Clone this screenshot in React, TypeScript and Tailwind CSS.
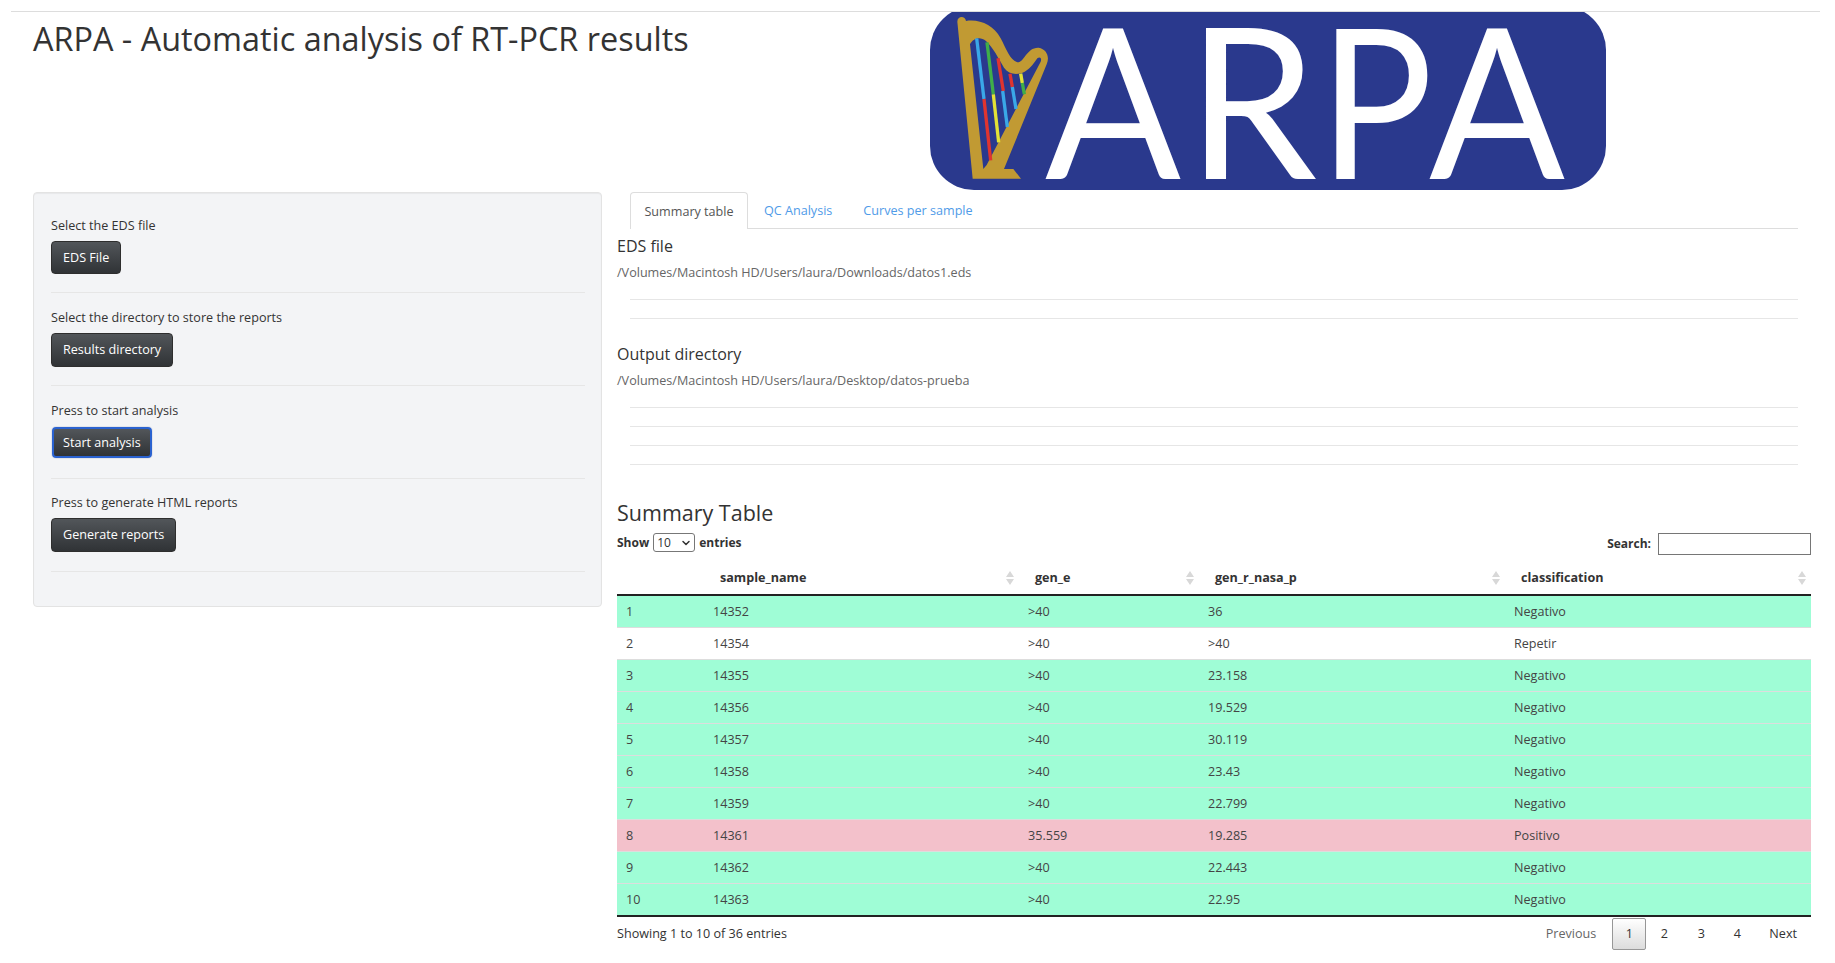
import { ChevronDown } from "lucide-react";

const rows = [
  ["1", "14352", ">40", "36", "Negativo"],
  ["2", "14354", ">40", ">40", "Repetir"],
  ["3", "14355", ">40", "23.158", "Negativo"],
  ["4", "14356", ">40", "19.529", "Negativo"],
  ["5", "14357", ">40", "30.119", "Negativo"],
  ["6", "14358", ">40", "23.43", "Negativo"],
  ["7", "14359", ">40", "22.799", "Negativo"],
  ["8", "14361", "35.559", "19.285", "Positivo"],
  ["9", "14362", ">40", "22.443", "Negativo"],
  ["10", "14363", ">40", "22.95", "Negativo"],
];

const rowColors: Record<string, string> = {
  Negativo: "bg-[#9ffdd6]",
  Repetir: "bg-white",
  Positivo: "bg-[#f3c1cb]",
};

function ArpaLogo() {
  const inner =
    "M120 118 C128 100 150 92 168 108 C190 128 205 160 222 188 C236 208 262 212 284 200 C302 190 314 172 322 160 C330 154 336 160 332 170 L170 480 L160 492 Z";
  return (
    <svg width="676" height="178" viewBox="0 0 676 178" className="block">
      <rect x="0" y="-6" width="676" height="184" rx="44" fill="#2a398d" />
      <g transform="scale(0.33333) translate(0 -21)">
        <path
          fillRule="evenodd"
          fill="#c19a33"
          d={`M82 50 C82 32 106 32 108 48 C150 42 190 60 212 100 C228 130 240 166 262 172 C282 174 290 126 326 128 C350 132 360 156 350 178 L222 492 L250 492 L273 521 L128 521 Z ${inner}`}
        />
        <g strokeWidth="10" fill="none">
          <path d="M140 100 L162 282" stroke="#3aa8e8" />
          <path d="M162 282 L182 466" stroke="#e0342f" />
          <path d="M171 112 L190 268" stroke="#3fae49" />
          <path d="M190 268 L206 412" stroke="#e3e236" />
          <path d="M204 160 L220 258" stroke="#e0342f" />
          <path d="M218 258 L232 366" stroke="#3aa8e8" />
          <path d="M240 206 L247 246" stroke="#e0342f" />
          <path d="M247 246 L258 312" stroke="#3aa8e8" />
          <path d="M272 206 L277 234" stroke="#e3e236" />
          <path d="M277 234 L283 268" stroke="#3fae49" />
        </g>
      </g>
      <g fill="#ffffff" fontFamily="Lato, 'Open Sans', sans-serif" fontWeight="400" fontSize="210">
        <text x="115" y="167" textLength="136" lengthAdjust="spacingAndGlyphs">A</text>
        <text x="257" y="167" textLength="130" lengthAdjust="spacingAndGlyphs">R</text>
        <text x="389" y="167" textLength="114" lengthAdjust="spacingAndGlyphs">P</text>
        <text x="499" y="167" textLength="136" lengthAdjust="spacingAndGlyphs">A</text>
      </g>
    </svg>
  );
}

function SortIcon() {
  return (
    <svg width="8" height="14" viewBox="0 0 8 14" className="absolute right-[5px] top-[10px]">
      <path d="M4 0 L8 6 L0 6 Z" fill="#d8d8d8" />
      <path d="M4 14 L8 8 L0 8 Z" fill="#d8d8d8" />
    </svg>
  );
}

function ActionButton({ label, height, focused }: { label: string; height: string; focused?: boolean }) {
  return (
    <button
      className={`${height} block rounded-[4px] bg-gradient-to-b from-[#52565a] to-[#303336] pt-px text-[12.6px] text-white ${
        focused
          ? "ml-px border-2 border-[#2a62d0] px-[9px] shadow-[0_0_0_1px_#e2e4ea]"
          : "border border-[#2e2e2e] px-[11px]"
      }`}
    >
      {label}
    </button>
  );
}

function Rule({ className }: { className: string }) {
  return <div className={`h-px bg-[#e6e6e6] ${className}`} />;
}

export default function App() {
  return (
    <div className="min-h-[963px] bg-white px-[11px] pt-[11px] font-['Open_Sans',sans-serif] text-[#333333]">
      <div className="mr-[4px] border-t border-[#dddddd]" />
      <header className="flex h-[178px]">
        <h1 className="w-[919px] pl-[22px] pt-[4px] text-[32.4px] leading-[44px] font-normal">
          ARPA - Automatic analysis of RT-PCR results
        </h1>
        <ArpaLogo />
      </header>
      <div className="mt-[2px] flex">
        <aside className="ml-[22px] h-[415px] w-[569px] rounded-[4px] border border-[#e3e3e3] bg-[#f3f4f6] pl-[17px] pr-[16px] pt-[24px] shadow-[inset_0_1px_1px_rgba(0,0,0,0.05)]">
          <p className="text-[12.6px] leading-[18px]">Select the EDS file</p>
          <div className="mt-[6px]">
            <ActionButton label="EDS File" height="h-[33px]" />
          </div>
          <Rule className="mt-[18px]" />
          <p className="mt-[16px] text-[12.6px] leading-[18px]">Select the directory to store the reports</p>
          <div className="mt-[6px]">
            <ActionButton label="Results directory" height="h-[34px]" />
          </div>
          <Rule className="mt-[18px]" />
          <p className="mt-[16px] text-[12.6px] leading-[18px]">Press to start analysis</p>
          <div className="mt-[7px]">
            <ActionButton label="Start analysis" height="h-[31px]" focused />
          </div>
          <Rule className="mt-[20px]" />
          <p className="mt-[15px] text-[12.6px] leading-[18px]">Press to generate HTML reports</p>
          <div className="mt-[6px]">
            <ActionButton label="Generate reports" height="h-[34px]" />
          </div>
          <Rule className="mt-[19px]" />
        </aside>
        <main className="ml-[15px] w-[1194px]">
          <nav className="mx-[13px] flex h-[37px] border-b border-[#dddddd] text-[12.6px] leading-[38px]">
            <span className="h-[37px] w-[118px] rounded-t-[4px] border border-b-0 border-[#dddddd] bg-white text-center text-[#555555]">
              Summary table
            </span>
            <span className="ml-[16px] text-[#4f9be8]">QC Analysis</span>
            <span className="ml-[31px] text-[#4f9be8]">Curves per sample</span>
          </nav>
          <h4 className="mt-[6px] text-[16px] leading-[22px]">EDS file</h4>
          <p className="mt-[7px] text-[12.6px] leading-[18px] text-[#666666]">
            /Volumes/Macintosh HD/Users/laura/Downloads/datos1.eds
          </p>
          <div className="mx-[13px]">
            <Rule className="mt-[17px]" />
            <Rule className="mt-[18px]" />
          </div>
          <h4 className="mt-[24px] text-[16px] leading-[22px]">Output directory</h4>
          <p className="mt-[7px] text-[12.6px] leading-[18px] text-[#666666]">
            /Volumes/Macintosh HD/Users/laura/Desktop/datos-prueba
          </p>
          <div className="mx-[13px]">
            <Rule className="mt-[17px]" />
            <Rule className="mt-[18px]" />
            <Rule className="mt-[18px]" />
            <Rule className="mt-[18px]" />
          </div>
          <h3 className="mt-[34px] text-[21.5px] leading-[28px]">Summary Table</h3>
          <div className="mt-[6px] flex h-[22px] justify-between text-[12px] font-bold">
            <div className="flex h-[19px] items-center">
              <span>Show</span>
              <div className="mx-[4px] flex h-[19px] w-[42px] items-center justify-between rounded-[3px] border border-[#777777] pl-[3px] pr-[2px] font-normal">
                <span>10</span>
                <ChevronDown size={12} strokeWidth={3} />
              </div>
              <span>entries</span>
            </div>
            <div className="flex items-center">
              <span>Search:</span>
              <div className="ml-[7px] h-[22px] w-[153px] border border-[#767676]" />
            </div>
          </div>
          <table className="mt-[6px] w-full table-fixed border-collapse text-[12.6px]">
            <colgroup>
              <col className="w-[87px]" />
              <col className="w-[315px]" />
              <col className="w-[180px]" />
              <col className="w-[306px]" />
              <col className="w-[306px]" />
            </colgroup>
            <thead>
              <tr className="h-[34px] border-b-2 border-[#222222] text-left font-bold">
                {["", "sample_name", "gen_e", "gen_r_nasa_p", "classification"].map((name) => (
                  <th key={name} className="relative pl-[16px] pt-[2px] font-bold">
                    {name}
                    {name && <SortIcon />}
                  </th>
                ))}
              </tr>
            </thead>
            <tbody>
              {rows.map((row) => (
                <tr key={row[0]} className={`h-[32px] border-t border-[#dddddd] ${rowColors[row[4]]}`}>
                  {row.map((cell, i) => (
                    <td key={i} className="pl-[9px] pt-[2px] text-[#444444]">
                      {cell}
                    </td>
                  ))}
                </tr>
              ))}
            </tbody>
          </table>
          <div className="flex h-[36px] items-center justify-between border-t-2 border-[#222222] text-[12.6px]">
            <span>Showing 1 to 10 of 36 entries</span>
            <div className="flex items-center">
              <span className="mr-[16px] text-[#666666]">Previous</span>
              <span className="h-[32px] w-[34px] rounded-[2px] border border-[#979797] bg-gradient-to-b from-white to-[#dcdcdc] text-center leading-[30px]">
                1
              </span>
              <span className="ml-[1px] w-[34px] text-center">2</span>
              <span className="ml-[3px] w-[34px] text-center">3</span>
              <span className="ml-[2px] w-[34px] text-center">4</span>
              <span className="pl-[15px] pr-[14px]">Next</span>
            </div>
          </div>
        </main>
      </div>
    </div>
  );
}
